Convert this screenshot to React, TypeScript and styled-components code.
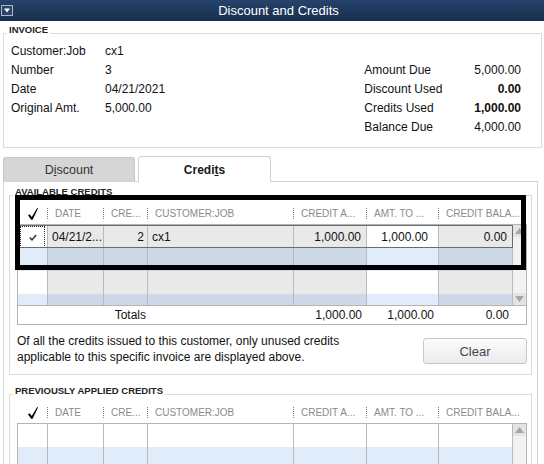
import React from 'react';
import styled, { createGlobalStyle } from 'styled-components';

type Align = 'left' | 'right';

interface Column {
  key: keyof CreditRow;
  label: string;
  width: number;
  align: Align;
  editable?: boolean;
}

interface CreditRow {
  checked?: boolean;
  date?: string;
  ref?: string;
  job?: string;
  amount?: string;
  apply?: string;
  balance?: string;
}

const columns: Column[] = [
  { key: 'date', label: 'DATE', width: 56, align: 'left' },
  { key: 'ref', label: 'CRE...', width: 44, align: 'right' },
  { key: 'job', label: 'CUSTOMER:JOB', width: 146, align: 'left' },
  { key: 'amount', label: 'CREDIT A...', width: 73, align: 'right' },
  { key: 'apply', label: 'AMT. TO ...', width: 72, align: 'right', editable: true },
  { key: 'balance', label: 'CREDIT BALA...', width: 74, align: 'right' },
];

const invoiceLeft = [
  ['Customer:Job', 'cx1'],
  ['Number', '3'],
  ['Date', '04/21/2021'],
  ['Original Amt.', '5,000.00'],
];

const invoiceRight: [string, string, boolean][] = [
  ['Amount Due', '5,000.00', false],
  ['Discount Used', '0.00', true],
  ['Credits Used', '1,000.00', true],
  ['Balance Due', '4,000.00', false],
];

const availableCredits: CreditRow[] = [
  {
    checked: true,
    date: '04/21/2...',
    ref: '2',
    job: 'cx1',
    amount: '1,000.00',
    apply: '1,000.00',
    balance: '0.00',
  },
  {},
  {},
  {},
];

const GlobalStyle = createGlobalStyle`
  html, body {
    margin: 0;
    padding: 0;
    background: #fff;
  }
  body {
    width: 544px;
    height: 464px;
    overflow: hidden;
    font-family: "Liberation Sans", Arial, sans-serif;
    color: #111;
  }
`;

const Window = styled.div`
  width: 544px;
  height: 464px;
  overflow: hidden;
`;

const TitleBar = styled.div`
  height: 21px;
  display: flex;
  align-items: center;
  padding-left: 1px;
  background: linear-gradient(#27436b, #172e4e);
  color: #fff;
  font-size: 13px;
`;

const TitleText = styled.div`
  flex: 1;
  text-align: center;
`;

const Content = styled.div`
  padding: 4px 2px 0 3px;
`;

const GroupBox = styled.fieldset<{ $pad: string; $mt?: number }>`
  margin: ${(p) => p.$mt ?? 0}px 0 0;
  padding: ${(p) => p.$pad};
  border: 1px solid #dcdcdc;
  min-width: 0;
`;

const GroupTitle = styled.legend`
  margin-left: 3px;
  padding: 0 2px 6px;
  font-size: 9.5px;
  line-height: 10px;
  font-weight: bold;
  color: #222;
  text-transform: uppercase;
`;

const InvoiceBody = styled.div`
  display: flex;
  justify-content: space-between;
  padding: 0 20px 11px 7px;
`;

const FieldGrid = styled.div<{ $labelWidth: number; $offset?: number }>`
  display: grid;
  grid-template-columns: ${(p) => p.$labelWidth}px auto;
  grid-auto-rows: 19px;
  align-items: center;
  margin-top: ${(p) => p.$offset ?? 0}px;
  font-size: 12px;
`;

const FieldLabel = styled.div`
  color: #111;
`;

const FieldValue = styled.div<{ $right?: boolean; $bold?: boolean }>`
  justify-self: ${(p) => (p.$right ? 'end' : 'start')};
  font-weight: ${(p) => (p.$bold ? 'bold' : 'normal')};
  color: #111;
`;

const TabBar = styled.div`
  display: flex;
  align-items: flex-end;
  gap: 3px;
  height: 26px;
  margin: 8px 4px 0 0;
  background: linear-gradient(#d4d4d4, #d4d4d4) bottom / 100% 1px no-repeat;
`;

const Tab = styled.div<{ $active?: boolean }>`
  box-sizing: border-box;
  width: ${(p) => (p.$active ? 133 : 132)}px;
  height: ${(p) => (p.$active ? 26 : 24)}px;
  margin-bottom: ${(p) => (p.$active ? 0 : 1)}px;
  display: flex;
  align-items: center;
  justify-content: center;
  border: 1px solid ${(p) => (p.$active ? '#d0d0d0' : '#c6c6c6')};
  border-bottom: none;
  border-radius: 3px 3px 0 0;
  background: ${(p) => (p.$active ? '#fff' : '#d6d6d6')};
  color: ${(p) => (p.$active ? '#1a1a1a' : '#333')};
  font-size: ${(p) => (p.$active ? 12 : 12.5)}px;
  font-weight: ${(p) => (p.$active ? 'bold' : 'normal')};
`;

const Panel = styled.div`
  margin-right: 4px;
  height: 290px;
  padding: 5px 5px 0;
  border: 1px solid #d4d4d4;
  border-top: none;
`;

const CreditsBody = styled.div<{ $bottom: number }>`
  padding: 0 5px ${(p) => p.$bottom}px 7px;
`;

const TableFrame = styled.div`
  position: relative;
  width: 510px;
`;

const HeaderRow = styled.div`
  display: flex;
  height: 21px;
  padding-left: 1px;
`;

const CheckHead = styled.div`
  width: 30px;
  display: flex;
  align-items: center;
  justify-content: center;
`;

const HeadCell = styled.div<{ $width: number }>`
  flex: none;
  width: ${(p) => p.$width}px;
  display: flex;
  align-items: center;
  white-space: nowrap;
  font-size: 10px;
  color: #8a8a8a;
`;

const HeadSep = styled.span`
  flex: none;
  width: 0;
  height: 11px;
  margin: 0 7px 0 -1px;
  border-left: 1px dotted #7c7c7c;
`;

const Body = styled.div<{ $height: number }>`
  display: flex;
  height: ${(p) => p.$height}px;
  overflow: hidden;
  border: 1px solid #b4b4b4;
  border-bottom: none;
`;

const Rows = styled.div`
  width: 495px;
`;

const Row = styled.div<{ $selected?: boolean }>`
  display: flex;
  height: 23px;
  outline: ${(p) => (p.$selected ? '1px solid #6c6c6c' : 'none')};
  outline-offset: -1px;
`;

const Cell = styled.div<{ $width: number; $align?: Align; $bg: string; $padRight?: number }>`
  box-sizing: border-box;
  width: ${(p) => p.$width}px;
  display: flex;
  align-items: center;
  justify-content: ${(p) => (p.$align === 'right' ? 'flex-end' : 'flex-start')};
  padding: 0 ${(p) => p.$padRight ?? 4}px 0 4px;
  border-right: 1px solid #bababa;
  background: ${(p) => p.$bg};
  font-size: 12px;
  white-space: nowrap;
  overflow: hidden;
`;

const CheckCell = styled.div<{ $bg: string }>`
  box-sizing: border-box;
  width: 30px;
  padding: 1px 2px 0 2px;
  display: flex;
  border-right: 1px solid #bababa;
  background: ${(p) => p.$bg};
`;

const FocusBox = styled.div<{ $focused?: boolean }>`
  flex: 1;
  display: flex;
  align-items: center;
  justify-content: center;
  border: 1px dotted ${(p) => (p.$focused ? '#222' : 'transparent')};
`;

const ScrollBar = styled.div`
  width: 13px;
  display: flex;
  flex-direction: column;
  justify-content: space-between;
  background: #f2f2f2;
`;

const ScrollButton = styled.div`
  height: 12px;
  display: flex;
  align-items: center;
  justify-content: center;
  background: #e4e4e4;
`;

const TotalsRow = styled.div`
  display: flex;
  height: 18px;
  border: 1px solid #b4b4b4;
  font-size: 12px;
`;

const TotalsCell = styled.div<{ $width: number; $padRight?: number }>`
  width: ${(p) => p.$width}px;
  box-sizing: border-box;
  display: flex;
  align-items: center;
  justify-content: flex-end;
  padding-right: ${(p) => p.$padRight ?? 0}px;
`;

const Highlight = styled.div`
  position: absolute;
  top: -8px;
  left: -2px;
  width: 511px;
  height: 75px;
  box-sizing: border-box;
  border: 5px solid #000;
  pointer-events: none;
`;

const Footer = styled.div`
  display: flex;
  justify-content: space-between;
  align-items: flex-start;
  margin-top: 8px;
  width: 510px;
`;

const Note = styled.p`
  margin: 0;
  font-size: 12px;
  line-height: 16px;
  color: #111;
`;

const ClearButton = styled.button`
  width: 104px;
  height: 26px;
  margin-top: 5px;
  border: 1px solid #c6c6c6;
  border-radius: 3px;
  background: linear-gradient(#fcfcfc, #ebebeb);
  font-family: "Liberation Sans", Arial, sans-serif;
  font-size: 13px;
  color: #3b4756;
`;

const WindowMenuIcon = () => (
  <svg width="12" height="11" viewBox="0 0 12 11">
    <rect x="0.5" y="0.5" width="11" height="10" fill="#2a4466" stroke="#aeb8c6" />
    <path d="M3 3.5 L9 3.5 L6 7.5 Z" fill="#fff" />
  </svg>
);

const HeadCheck = () => (
  <svg width="10" height="12" viewBox="0 0 10 12">
    <path d="M0 7.2 L1.6 6.2 L3.8 9 L9.2 0 L10 0.6 L4.6 11.8 L3.2 11.8 Z" fill="#000" />
  </svg>
);

const RowCheck = () => (
  <svg width="8" height="7" viewBox="0 0 8 7">
    <path d="M0.8 3.6 L3 5.8 L7.2 1" fill="none" stroke="#3a3a3a" strokeWidth="1.5" />
  </svg>
);

const ArrowUp = () => (
  <svg width="9" height="6" viewBox="0 0 9 6">
    <path d="M0 6 L4.5 0 L9 6 Z" fill="#a6a6a6" />
  </svg>
);

const ArrowDown = () => (
  <svg width="9" height="6" viewBox="0 0 9 6">
    <path d="M0 0 L9 0 L4.5 6 Z" fill="#a6a6a6" />
  </svg>
);

// read-only columns are shaded, the editable ones (check, amount to apply) stay light
const cellBg = (index: number, editable: boolean, shaded: boolean) => {
  const even = index % 2 === 1;
  if (!shaded) return even ? '#e1ecfb' : '#fff';
  if (editable) return even ? '#e1ecfa' : '#fff';
  return even ? '#cdd9e7' : '#e9e9e9';
};

const CreditsTable: React.FC<{ rows: CreditRow[]; height: number; shaded: boolean; showDown?: boolean }> = ({
  rows,
  height,
  shaded,
  showDown,
}) => (
  <>
    <HeaderRow>
      <CheckHead>
        <HeadCheck />
      </CheckHead>
      {columns.map((col) => (
        <HeadCell key={col.key} $width={col.width}>
          <HeadSep />
          {col.label}
        </HeadCell>
      ))}
    </HeaderRow>
    <Body $height={height}>
      <Rows>
        {rows.map((row, i) => (
          <Row key={i} $selected={i === 0 && !!row.date}>
            <CheckCell $bg={cellBg(i, true, shaded)}>
              <FocusBox $focused={i === 0 && !!row.date}>{row.checked && <RowCheck />}</FocusBox>
            </CheckCell>
            {columns.map((col) => (
              <Cell
                key={col.key}
                $width={col.width}
                $align={col.align}
                $bg={cellBg(i, !!col.editable, shaded)}
                $padRight={col.key === 'ref' ? 3 : col.key === 'apply' ? 10 : 5}
              >
                {row[col.key] as string}
              </Cell>
            ))}
          </Row>
        ))}
      </Rows>
      <ScrollBar>
        <ScrollButton>
          <ArrowUp />
        </ScrollButton>
        {showDown && (
          <ScrollButton>
            <ArrowDown />
          </ScrollButton>
        )}
      </ScrollBar>
    </Body>
  </>
);

const App: React.FC = () => (
  <Window>
    <GlobalStyle />
    <TitleBar>
      <WindowMenuIcon />
      <TitleText>Discount and Credits</TitleText>
    </TitleBar>
    <Content>
      <GroupBox $pad="0">
        <GroupTitle>Invoice</GroupTitle>
        <InvoiceBody>
          <FieldGrid $labelWidth={94}>
            {invoiceLeft.map(([label, value]) => (
              <React.Fragment key={label}>
                <FieldLabel>{label}</FieldLabel>
                <FieldValue>{value}</FieldValue>
              </React.Fragment>
            ))}
          </FieldGrid>
          <FieldGrid $labelWidth={110} $offset={19}>
            {invoiceRight.map(([label, value, bold]) => (
              <React.Fragment key={label}>
                <FieldLabel>{label}</FieldLabel>
                <FieldValue $right $bold={bold}>
                  {value}
                </FieldValue>
              </React.Fragment>
            ))}
          </FieldGrid>
        </InvoiceBody>
      </GroupBox>

      <TabBar>
        <Tab>
          <span>
            D<u>i</u>scount
          </span>
        </Tab>
        <Tab $active>
          <span>
            Credi<u>t</u>s
          </span>
        </Tab>
      </TabBar>
      <Panel>
        <GroupBox $pad="0">
          <GroupTitle>Available Credits</GroupTitle>
          <CreditsBody $bottom={9}>
            <TableFrame>
              <CreditsTable rows={availableCredits} height={80} shaded showDown />
              <TotalsRow>
                <TotalsCell $width={131} $padRight={3}>
                  Totals
                </TotalsCell>
                <TotalsCell $width={146} />
                <TotalsCell $width={73} $padRight={6}>
                  1,000.00
                </TotalsCell>
                <TotalsCell $width={72} $padRight={6}>
                  1,000.00
                </TotalsCell>
                <TotalsCell $width={74} $padRight={5}>
                  0.00
                </TotalsCell>
              </TotalsRow>
              <Highlight />
            </TableFrame>
            <Footer>
              <Note>
                Of all the credits issued to this customer, only unused credits
                <br />
                applicable to this specific invoice are displayed above.
              </Note>
              <ClearButton>Clear</ClearButton>
            </Footer>
          </CreditsBody>
        </GroupBox>

        <GroupBox $pad="0" $mt={11}>
          <GroupTitle>Previously Applied Credits</GroupTitle>
          <CreditsBody $bottom={0}>
            <TableFrame>
              <CreditsTable rows={[{}, {}, {}]} height={70} shaded={false} />
            </TableFrame>
          </CreditsBody>
        </GroupBox>
      </Panel>
    </Content>
  </Window>
);

export default App;
